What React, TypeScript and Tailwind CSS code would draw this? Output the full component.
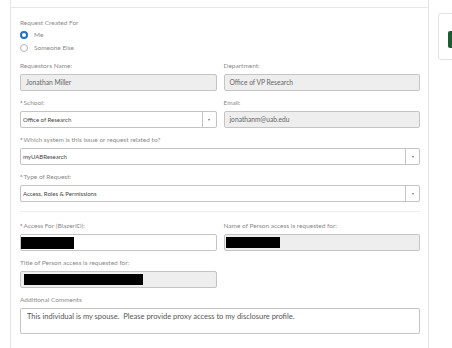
import React from "react";

const font = { fontFamily: "Lato, 'Open Sans', sans-serif" };

function Label({ text, required }: { text: string; required?: boolean }) {
  return (
    <div className="h-[10px] leading-[10px] text-[6.5px] text-[#8a8a8a] whitespace-nowrap">
      {required && <span className="text-[#222] text-[6px] mr-[1px] align-top">*</span>}
      {text}
    </div>
  );
}

function TextBox({ value, gray, children }: { value?: string; gray?: boolean; children?: React.ReactNode }) {
  return (
    <div
      className={`mt-[3px] h-[17px] border border-[#c4c4c4] rounded-[2px] flex items-center pl-[5px] text-[6.7px] text-[#666] ${
        gray ? "bg-[#eeeeee]" : "bg-white"
      }`}
    >
      {value}
      {children}
    </div>
  );
}

function Select({ value }: { value: string }) {
  return (
    <div className="mt-[3px] h-[17px] border border-[#c4c4c4] rounded-[2px] flex bg-white">
      <div className="flex-1 flex items-center pl-[2px] text-[6px] text-[#444]">{value}</div>
      <div className="w-[14px] border-l border-[#c4c4c4] flex items-center justify-center">
        <div className="w-0 h-0 border-l-[1.5px] border-r-[1.5px] border-t-[2px] border-l-transparent border-r-transparent border-t-[#777]" />
      </div>
    </div>
  );
}

function Redacted({ className }: { className: string }) {
  return <div className={`bg-black ${className}`} />;
}

export default function App() {
  return (
    <div className="w-[452px] h-[348px] bg-white flex overflow-hidden" style={font}>
      <div className="ml-[10px] w-[419px] shrink-0 border-x border-[#e6e6e6] h-full">
        <div className="h-[8px] border-b border-[#e6e6e6]" />
        <div className="pl-[9px] pr-[8px] pt-[10px]">
          <Label text="Request Created For" />
          <div className="h-[13px] flex items-center gap-[6px]">
            <div className="w-[8px] h-[8px] rounded-full border-[2.5px] border-[#1f6fc4] bg-white" />
            <span className="text-[6.5px] text-[#8a8a8a]">Me</span>
          </div>
          <div className="h-[13px] flex items-center gap-[6px]">
            <div className="w-[8px] h-[8px] rounded-full border border-[#b5b5b5] bg-white" />
            <span className="text-[6.5px] text-[#8a8a8a]">Someone Else</span>
          </div>

          <div className="mt-[7px] grid grid-cols-2 gap-x-[7px] gap-y-[7px]">
            <div>
              <Label text="Requestors Name:" />
              <TextBox value="Jonathan Miller" gray />
            </div>
            <div>
              <Label text="Department:" />
              <TextBox value="Office of VP Research" gray />
            </div>
            <div>
              <Label text="School:" required />
              <Select value="Office of Research" />
            </div>
            <div>
              <Label text="Email:" />
              <TextBox value="jonathanm@uab.edu" gray />
            </div>
          </div>

          <div className="mt-[7px]">
            <Label text="Which system is this issue or request related to?" required />
            <Select value="myUABResearch" />
          </div>
          <div className="mt-[7px]">
            <Label text="Type of Request:" required />
            <Select value="Access, Roles & Permissions" />
          </div>

          <div className="mt-[9px] border-t border-[#ececec]" />

          <div className="mt-[9px] grid grid-cols-2 gap-x-[7px] gap-y-[7px]">
            <div>
              <Label text="Access For (BlazerID):" required />
              <div className="mt-[3px] h-[17px] border border-[#c4c4c4] rounded-[2px] bg-white flex items-center">
                <Redacted className="w-[53px] h-[12px]" />
              </div>
            </div>
            <div>
              <Label text="Name of Person access is requested for:" />
              <div className="mt-[3px] h-[17px] border border-[#c4c4c4] rounded-[2px] bg-[#eeeeee] flex items-center pl-[1px]">
                <Redacted className="w-[54px] h-[11px]" />
              </div>
            </div>
            <div>
              <Label text="Title of Person access is requested for:" />
              <div className="mt-[3px] h-[17px] border border-[#c4c4c4] rounded-[2px] bg-[#eeeeee] flex items-center pl-[3px]">
                <Redacted className="w-[119px] h-[11px]" />
              </div>
            </div>
          </div>

          <div className="mt-[7px]">
            <Label text="Additional Comments" />
            <div className="mt-[3px] h-[26px] border border-[#c4c4c4] rounded-[2px] bg-white pl-[6px] pt-[3px] text-[7.5px] leading-[9px] text-[#555] whitespace-pre">
              {"This individual is my spouse.  Please provide proxy access to my disclosure profile."}
            </div>
          </div>
        </div>
      </div>

      <div className="ml-[9px] mt-[13px] w-[40px] h-[47px] shrink-0 border border-[#e2e2e2] rounded-[3px] flex items-start pt-[17px] pl-[9px]">
        <div className="w-[30px] h-[17px] bg-[#1e5a33] rounded-[2px]" />
      </div>
    </div>
  );
}
